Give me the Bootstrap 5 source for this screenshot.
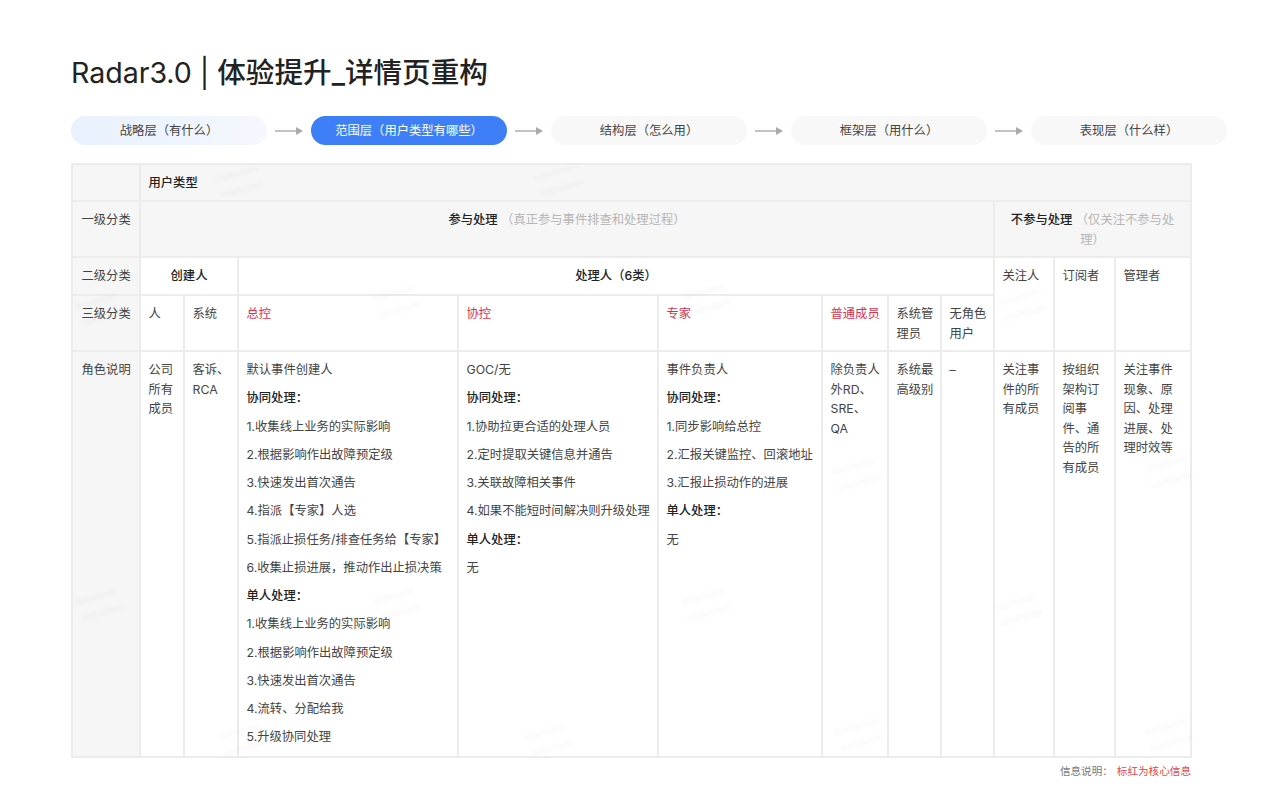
<!DOCTYPE html>
<html lang="zh-CN">
<head>
  <meta charset="UTF-8">
  <meta name="viewport" content="width=device-width, initial-scale=1">
  <title>Radar3.0 | 体验提升_详情页重构</title>
  <link href="https://cdn.jsdelivr.net/npm/bootstrap@5.3.3/dist/css/bootstrap.min.css" rel="stylesheet">
  <style>
    body {
      background: #fff;
      color: #444;
      font-family: Inter, "Noto Sans CJK SC", sans-serif;
      font-size: 12.3px;
    }
    .page-wrap { padding: 53px 0 0 71px; width: 1280px; }
    .page-title {
      font-size: 28.6px;
      font-weight: 500;
      line-height: 40px;
      color: #222;
      margin: 0 0 23px;
    }
    .title-latin { font-weight: 400; letter-spacing: -0.05px; }
    .layer-pill {
      width: 196px;
      height: 29px;
      border-radius: 15px;
      background: #f8f8f8;
      color: #444;
      line-height: 29px;
    }
    .layer-first { background: linear-gradient(90deg, #e8f1fd, #f5f8fd); }
    .layer-active { background: #3e7ff7; color: #fff; }
    .layer-arrow { width: 28px; height: 10px; margin: 0 8px; flex: none; }
    .role-table {
      table-layout: fixed;
      width: 1119px;
      margin: 18px 0 0;
      border-collapse: collapse;
      line-height: 19.5px;
      color: #444;
    }
    .role-table td {
      border: 2px solid #ececec;
      padding: 8px 7.5px 0;
      vertical-align: top;
    }
    .role-table td.shade { background: #f6f6f6; }
    .role-table td.lead-col { padding-left: 8.5px; }
    .role-table td.tight { padding-right: 6px; }
    .role-table p { margin: 0 0 8.75px; }
    .role-table b { font-weight: 500; color: #222; }
    .row-a { height: 37px; }
    .row-b { height: 56px; }
    .row-c { height: 38px; }
    .row-d { height: 56px; }
    .row-e { height: 406px; }
    .row-a td { vertical-align: middle; padding-top: 0; }
    .role-table td.key-red { color: #d8344f; }
    .note-gray { color: #b5b5b5; }
    .foot-note { width: 1120px; margin-top: 6px; font-size: 10.6px; color: #777; line-height: 16px; }
    .foot-red { color: #e0474a; margin-left: 4px; }
    .mark-layer { position: absolute; left: 0; top: 0; pointer-events: none; }
  </style>
</head>
<body>
  <div class="page-wrap">
    <h1 class="page-title"><span class="title-latin">Radar3.0 | </span>体验提升_详情页重构</h1>

    <div class="d-flex align-items-center">
      <div class="layer-pill layer-first text-center">战略层（有什么）</div>
      <svg class="layer-arrow" viewBox="0 0 28 10"><path d="M0 5h21" stroke="#aaa" stroke-width="1.4"/><path d="M21 1l7 4-7 4z" fill="#aaa"/></svg>
      <div class="layer-pill layer-active text-center">范围层（用户类型有哪些）</div>
      <svg class="layer-arrow" viewBox="0 0 28 10"><path d="M0 5h21" stroke="#aaa" stroke-width="1.4"/><path d="M21 1l7 4-7 4z" fill="#aaa"/></svg>
      <div class="layer-pill text-center">结构层（怎么用）</div>
      <svg class="layer-arrow" viewBox="0 0 28 10"><path d="M0 5h21" stroke="#aaa" stroke-width="1.4"/><path d="M21 1l7 4-7 4z" fill="#aaa"/></svg>
      <div class="layer-pill text-center">框架层（用什么）</div>
      <svg class="layer-arrow" viewBox="0 0 28 10"><path d="M0 5h21" stroke="#aaa" stroke-width="1.4"/><path d="M21 1l7 4-7 4z" fill="#aaa"/></svg>
      <div class="layer-pill text-center">表现层（什么样）</div>
    </div>

    <table class="role-table">
      <colgroup>
        <col style="width:68px"><col style="width:44px"><col style="width:54px"><col style="width:220px">
        <col style="width:200px"><col style="width:164px"><col style="width:66px"><col style="width:53px">
        <col style="width:53px"><col style="width:60px"><col style="width:61px"><col style="width:76px">
      </colgroup>
      <tr class="row-a">
        <td class="shade"></td>
        <td class="shade" colspan="11"><b>用户类型</b></td>
      </tr>
      <tr class="row-b">
        <td class="shade lead-col">一级分类</td>
        <td class="shade text-center" colspan="8"><b>参与处理</b> <span class="note-gray">（真正参与事件排查和处理过程）</span></td>
        <td class="shade text-center" colspan="3"><b>不参与处理</b><span class="note-gray"> （仅关注不参与处<br>理）</span></td>
      </tr>
      <tr class="row-c">
        <td class="shade lead-col">二级分类</td>
        <td class="text-center" colspan="2"><b>创建人</b></td>
        <td class="text-center" colspan="6"><b>处理人（6类）</b></td>
        <td rowspan="2">关注人</td>
        <td rowspan="2">订阅者</td>
        <td rowspan="2">管理者</td>
      </tr>
      <tr class="row-d">
        <td class="shade lead-col">三级分类</td>
        <td>人</td>
        <td>系统</td>
        <td class="key-red">总控</td>
        <td class="key-red">协控</td>
        <td class="key-red">专家</td>
        <td class="key-red tight">普通成员</td>
        <td class="tight">系统管理员</td>
        <td class="tight">无角色用户</td>
      </tr>
      <tr class="row-e">
        <td class="shade lead-col">角色说明</td>
        <td>公司所有成员</td>
        <td>客诉、RCA</td>
        <td>
          <p>默认事件创建人</p>
          <p><b>协同处理：</b></p>
          <p>1.收集线上业务的实际影响</p>
          <p>2.根据影响作出故障预定级</p>
          <p>3.快速发出首次通告</p>
          <p>4.指派【专家】人选</p>
          <p>5.指派止损任务/排查任务给【专家】</p>
          <p>6.收集止损进展，推动作出止损决策</p>
          <p><b>单人处理：</b></p>
          <p>1.收集线上业务的实际影响</p>
          <p>2.根据影响作出故障预定级</p>
          <p>3.快速发出首次通告</p>
          <p>4.流转、分配给我</p>
          <p>5.升级协同处理</p>
        </td>
        <td class="tight">
          <p>GOC/无</p>
          <p><b>协同处理：</b></p>
          <p>1.协助拉更合适的处理人员</p>
          <p>2.定时提取关键信息并通告</p>
          <p>3.关联故障相关事件</p>
          <p>4.如果不能短时间解决则升级处理</p>
          <p><b>单人处理：</b></p>
          <p>无</p>
        </td>
        <td>
          <p>事件负责人</p>
          <p><b>协同处理：</b></p>
          <p>1.同步影响给总控</p>
          <p>2.汇报关键监控、回滚地址</p>
          <p>3.汇报止损动作的进展</p>
          <p><b>单人处理：</b></p>
          <p>无</p>
        </td>
        <td class="tight">除负责人外RD、SRE、QA</td>
        <td class="tight">系统最高级别</td>
        <td>–</td>
        <td>关注事件的所有成员</td>
        <td>按组织架构订阅事件、通告的所有成员</td>
        <td>关注事件现象、原因、处理进展、处理时效等</td>
      </tr>
    </table>

    <div class="foot-note text-end">信息说明：<span class="foot-red">标红为核心信息</span></div>
  </div>

  <!-- faint blurred watermark smudges over the page -->
  <svg class="mark-layer" width="1280" height="801" viewBox="0 0 1280 801">
    <defs>
      <filter id="smudge"><feGaussianBlur stdDeviation="1.6"/></filter>
      <g id="wm"><path d="M0 8l42-12M6 24l42-12" stroke="#000" stroke-opacity=".016" stroke-width="6" fill="none" filter="url(#smudge)"/></g>
    </defs>
    <use href="#wm" x="215" y="172"/><use href="#wm" x="535" y="170"/>
    <use href="#wm" x="372" y="292"/><use href="#wm" x="75" y="300"/><use href="#wm" x="682" y="290"/><use href="#wm" x="998" y="295"/>
    <use href="#wm" x="832" y="465"/><use href="#wm" x="1145" y="462"/>
    <use href="#wm" x="75" y="595"/><use href="#wm" x="372" y="595"/><use href="#wm" x="682" y="595"/><use href="#wm" x="995" y="600"/>
    <use href="#wm" x="218" y="730"/><use href="#wm" x="525" y="730"/><use href="#wm" x="835" y="725"/><use href="#wm" x="1145" y="725"/>
  </svg>
  <script src="https://cdn.jsdelivr.net/npm/bootstrap@5.3.3/dist/js/bootstrap.bundle.min.js"></script>
</body>
</html>
